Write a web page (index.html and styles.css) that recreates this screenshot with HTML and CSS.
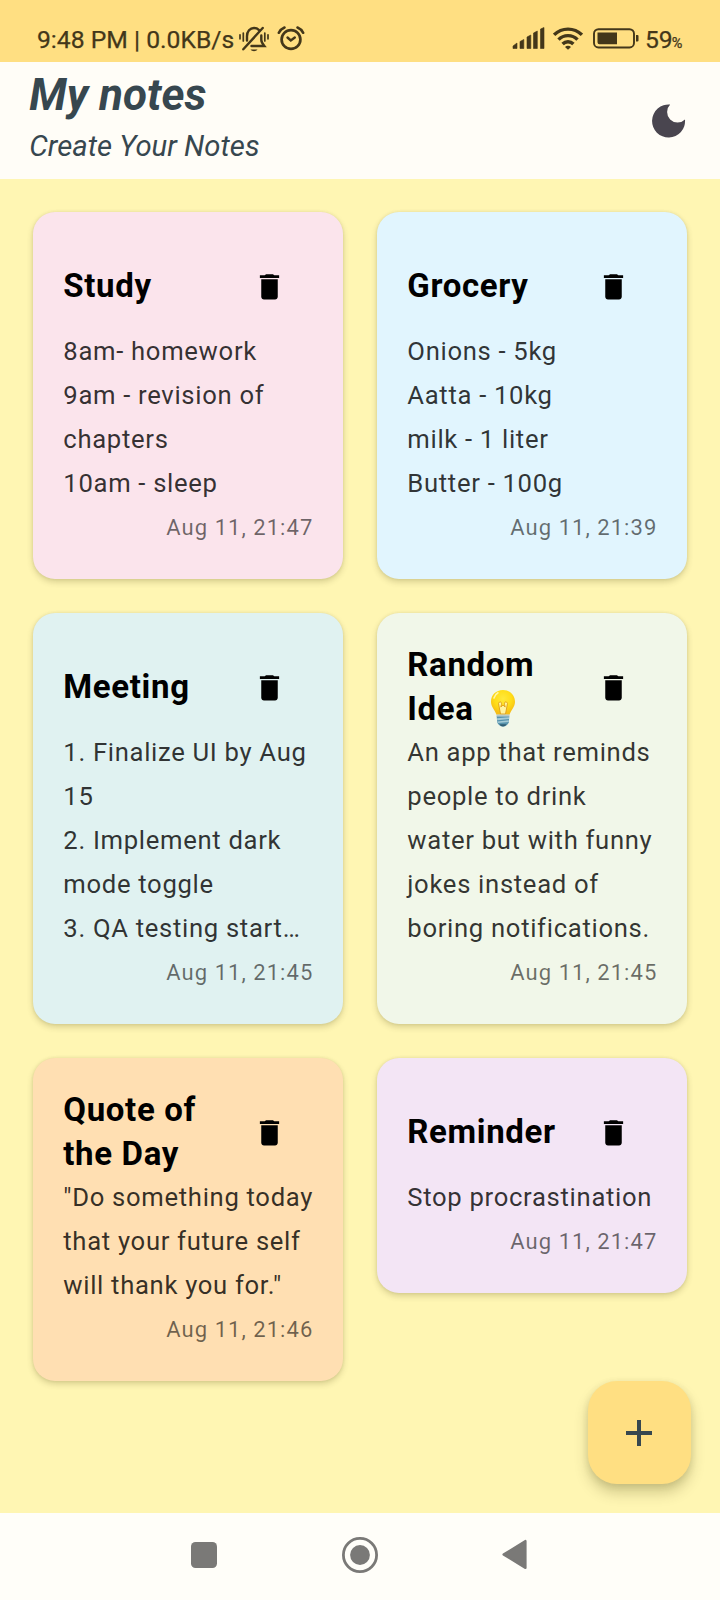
FILE: index.html
```html
<!DOCTYPE html>
<html lang="en">
<head>
<meta charset="utf-8">
<title>My notes</title>
<link rel="stylesheet" href="styles.css">
</head>
<body>
<svg class="defs" aria-hidden="true">
  <symbol id="trash" viewBox="0 0 24 24"><path d="M6 19.500c0 1.100.9 2 2 2h8c1.100 0 2-.9 2-2V6.700H6v12.800zM19 3.800h-3.500l-1-.8h-5l-1 .8H5v2h14v-2z"/></symbol>
</svg>
<div class="screen">
  <div class="status">
    <span class="clock">9:48 PM | 0.0KB/s</span>
    <svg class="mute" viewBox="0 0 30 26" fill="none" stroke="currentColor" stroke-width="2.400" stroke-linecap="round">
      <path d="M8 14.500V10.200C8 5.500 11 2 15 2c2 0 3.600.6 4.800 1.800M22.300 9.500v4.500c0 2 1 3.500 3 6H12.500M4.300 23.300L23.700 2"/>
      <path d="M11.500 23.500h7c-1.500 2.300-5.500 2.300-7 0z" fill="currentColor" stroke="none"/>
      <path d="M1 8.800v4M4.300 7v8M25.800 7v8M29 8.800v4" stroke-width="1.700"/>
    </svg>
    <svg class="alarm" viewBox="0 0 28 26" fill="none" stroke="currentColor" stroke-width="2.700">
      <circle cx="14" cy="13.500" r="9.400"/>
      <path d="M1.800 6.800C3 4.500 5 2.500 7.500 1.500M26.200 6.800C25 4.500 23 2.500 20.500 1.500" stroke-width="2.500" stroke-linecap="round"/>
      <path d="M10.500 11.500l3.300 3 4-3" stroke-width="2.400" stroke-linecap="round"/>
    </svg>
    <svg class="signal" viewBox="0 0 33 22" fill="currentColor">
      <path d="M1 21.500v-2.500l4-3v5.500zM8 21.500v-7l3.800-2v9zM15 21.500V10l3.800-2v13.500zM21.500 21.500V6l3.800-2v17.500zM28.500 21.500V2l3.500-1.500v21z" stroke="currentColor" stroke-width=".6" stroke-linejoin="round"/>
    </svg>
    <svg class="wifi" viewBox="0 0 30 23" fill="none" stroke="currentColor" stroke-width="3.400">
      <path d="M1.100 7.800a19.800 19.800 0 0 1 27.800 0M5.500 12.600a13.300 13.300 0 0 1 19 0M9.600 17a7.600 7.600 0 0 1 10.800 0"/>
      <path d="M15 22.800l-3-2.800a4 4 0 0 1 6 0z" fill="currentColor" stroke="none"/>
    </svg>
    <svg class="battery" viewBox="0 0 46 21">
      <rect x="1" y="1.200" width="40" height="18.300" rx="4.500" fill="none" stroke="currentColor" stroke-width="1.900"/>
      <path d="M4.500 4.500H24v11.700H6.500a2 2 0 0 1-2-2zM43 7h1.500a1 1 0 0 1 1 1v4.500a1 1 0 0 1-1 1H43z" fill="currentColor"/>
    </svg>
    <span class="level">59<small>%</small></span>
  </div>

  <header class="appbar">
    <div>
      <h1>My notes</h1>
      <p>Create Your Notes</p>
    </div>
    <svg class="moon" viewBox="0 0 34 34"><path d="M18.200.6A16.500 16.500 0 1 0 33 15.500A10.500 10.500 0 0 1 18.200.6z"/></svg>
  </header>

  <main class="board">
    <div class="grid">
      <article class="card pink">
        <div class="head"><h2>Study</h2><span class="del"><svg><use href="#trash"/></svg></span></div>
        <p class="body">8am- homework<br>9am - revision of<br>chapters<br>10am - sleep</p>
        <p class="date">Aug 11, 21:47</p>
      </article>
      <article class="card blue">
        <div class="head"><h2>Grocery</h2><span class="del"><svg><use href="#trash"/></svg></span></div>
        <p class="body">Onions - 5kg<br>Aatta - 10kg<br>milk - 1 liter<br>Butter - 100g</p>
        <p class="date">Aug 11, 21:39</p>
      </article>
      <article class="card teal">
        <div class="head"><h2>Meeting</h2><span class="del"><svg><use href="#trash"/></svg></span></div>
        <p class="body">1. Finalize UI by Aug<br>15<br>2. Implement dark<br>mode toggle<br>3. QA testing start…</p>
        <p class="date">Aug 11, 21:45</p>
      </article>
      <article class="card green">
        <div class="head"><h2>Random<br>Idea <svg class="bulb" viewBox="0 0 26 38" role="img" aria-label="light bulb">
          <defs><radialGradient id="glow" cx=".5" cy=".35" r=".6"><stop offset="0" stop-color="#ffe93b"/><stop offset=".6" stop-color="#ffdd18"/><stop offset="1" stop-color="#f7be16"/></radialGradient></defs>
          <path d="M13 1C6 1 1 6 1 12.800c0 5 3.700 8 5.500 13h13C21.300 20.800 25 17.800 25 12.800 25 6 20 1 13 1z" fill="url(#glow)"/>
          <path d="M8.500 14.500c1-2.500 3.300-2 3 .8L10.800 18 13 16l2.200 2-.7-2.700c-.3-2.800 2-3.300 3-.8L15.500 25h-5z" fill="#fff3a0" stroke="#df9d18" stroke-width=".9"/>
          <path d="M6.500 25.500h13v2.300h-13z" fill="#b6c8ca"/>
          <path d="M6.700 27.500h12.600l-.5 6c-1 2-2.800 4-5.800 4s-4.800-2-5.800-4z" fill="#5793ad"/>
          <path d="M7 29.300l12-1v1.700l-11.800 1.200zM7.300 32.500l11.500-1.200v1.600L7.500 34z" fill="#a5cbd6"/>
          <path d="M9.500 35.300h7c-1 1.600-2 2.200-3.500 2.200s-2.500-.6-3.500-2.200z" fill="#315e73"/>
          <path d="M4 9c.7-2.300 2-4 4-5.200" fill="none" stroke="#fff6a5" stroke-width="1.600" stroke-linecap="round"/>
        </svg></h2><span class="del"><svg><use href="#trash"/></svg></span></div>
        <p class="body">An app that reminds<br>people to drink<br>water but with funny<br>jokes instead of<br>boring notifications.</p>
        <p class="date">Aug 11, 21:45</p>
      </article>
      <article class="card orange">
        <div class="head"><h2>Quote of<br>the Day</h2><span class="del"><svg><use href="#trash"/></svg></span></div>
        <p class="body">"Do something today<br>that your future self<br>will thank you for."</p>
        <p class="date">Aug 11, 21:46</p>
      </article>
      <article class="card purple">
        <div class="head"><h2>Reminder</h2><span class="del"><svg><use href="#trash"/></svg></span></div>
        <p class="body">Stop procrastination</p>
        <p class="date">Aug 11, 21:47</p>
      </article>
    </div>
    <div class="fab"><svg viewBox="0 0 26 26"><path d="M13 0v26M0 13h26"/></svg></div>
  </main>

  <nav class="navbar">
    <svg class="recent" viewBox="0 0 26 26"><rect width="26" height="26" rx="4.500"/></svg>
    <svg class="home" viewBox="0 0 36 36"><circle cx="18" cy="18" r="16.600" fill="none" stroke="#7a7977" stroke-width="2.800"/><circle cx="18" cy="18" r="9.900"/></svg>
    <svg class="back" viewBox="0 0 25 31"><path d="M1.500 15.500L23.500 2v27z" stroke="#7a7977" stroke-width="2.200" stroke-linejoin="round"/></svg>
  </nav>
</div>
</body>
</html>
```
FILE: styles.css
```css
* { box-sizing: border-box; margin: 0; padding: 0; }
body { font-family: Roboto, "Liberation Sans", sans-serif; background: #fff6b3; }
.defs { position: absolute; width: 0; height: 0; }
svg { display: block; flex: none; }
.screen { width: 720px; height: 1600px; display: flex; flex-direction: column; overflow: hidden; }

.status { height: 62px; flex: none; background: #ffdf82; color: #43371a; display: flex; align-items: flex-start; padding: 26px 37px 0; font-size: 24.700px; line-height: 27px; -webkit-text-stroke: .25px #43371a; }
.clock { width: 201px; white-space: nowrap; }
.mute { width: 30px; height: 26px; margin-left: 1px; }
.alarm { width: 28px; height: 26px; margin-left: 8px; }
.signal { width: 33px; height: 22px; margin: 1px 0 0 auto; }
.wifi { width: 30px; height: 23px; margin: 1px 0 0 8px; }
.battery { width: 46px; height: 21px; margin: 2px 0 0 10px; }
.level { margin-left: 6px; width: 38px; white-space: nowrap; }
.level small { font-size: 14.500px; margin-left: -1px; }

.appbar { height: 117px; flex: none; background: #fffdf7; color: #37474f; display: flex; justify-content: space-between; padding: 4px 34px 0 29.330px; }
.appbar h1 { font-size: 44px; line-height: 58px; font-weight: 700; font-style: italic; }
.appbar p { font-size: 29.300px; line-height: 44px; font-style: italic; }
.moon { width: 34px; height: 34px; margin-top: 38px; fill: #49454f; }

.board { position: relative; height: 1334px; flex: none; background: #fff6b3; padding: 33px 33.300px; }
.grid { display: grid; grid-template-columns: 310px 310px; gap: 34px; align-items: start; }
.card { border-radius: 22px; padding: 30px 30px 29px 30px; box-shadow: 0 3px 6px rgba(60, 55, 0, .2), 0 0 3px rgba(60, 55, 0, .1); }
.pink { background: #fbe4ec; }
.blue { background: #e1f5fe; }
.teal { background: #e0f2f1; }
.green { background: #f1f7e9; }
.orange { background: #ffdfb2; }
.purple { background: #f3e5f5; }
.head { display: flex; align-items: center; height: 88px; }
.head h2 { flex: 1; font-size: 33px; line-height: 44px; font-weight: 700; letter-spacing: .65px; white-space: nowrap; color: #000; }
.del { width: 87px; display: flex; justify-content: center; }
.del svg { width: 33px; height: 33px; }
.bulb { display: inline-block; width: 26px; height: 38px; vertical-align: -7px; margin-left: 8px; }
.body { margin: -1px 0 1px; font-size: 25.667px; line-height: 44px; letter-spacing: .68px; white-space: nowrap; color: rgba(0, 0, 0, .8); }
.date { font-size: 22px; line-height: 44px; letter-spacing: 1.040px; text-align: right; color: rgba(0, 0, 0, .56); }

.fab { position: absolute; right: 29px; bottom: 29px; width: 103px; height: 103px; border-radius: 29px; background: #ffdf82; display: flex; align-items: center; justify-content: center; box-shadow: 0 9px 14px rgba(60, 55, 0, .22), 0 2px 7px rgba(60, 55, 0, .12); }
.fab svg { width: 26px; height: 26px; margin-right: 1px; stroke: #37474f; stroke-width: 4; }

.navbar { height: 87px; flex: none; background: #fffef9; display: flex; align-items: center; padding: 0 193px 4px 191px; justify-content: space-between; fill: #7a7977; }
.recent { width: 26px; height: 26px; }
.home { width: 36px; height: 36px; }
.back { width: 25px; height: 31px; }
```
